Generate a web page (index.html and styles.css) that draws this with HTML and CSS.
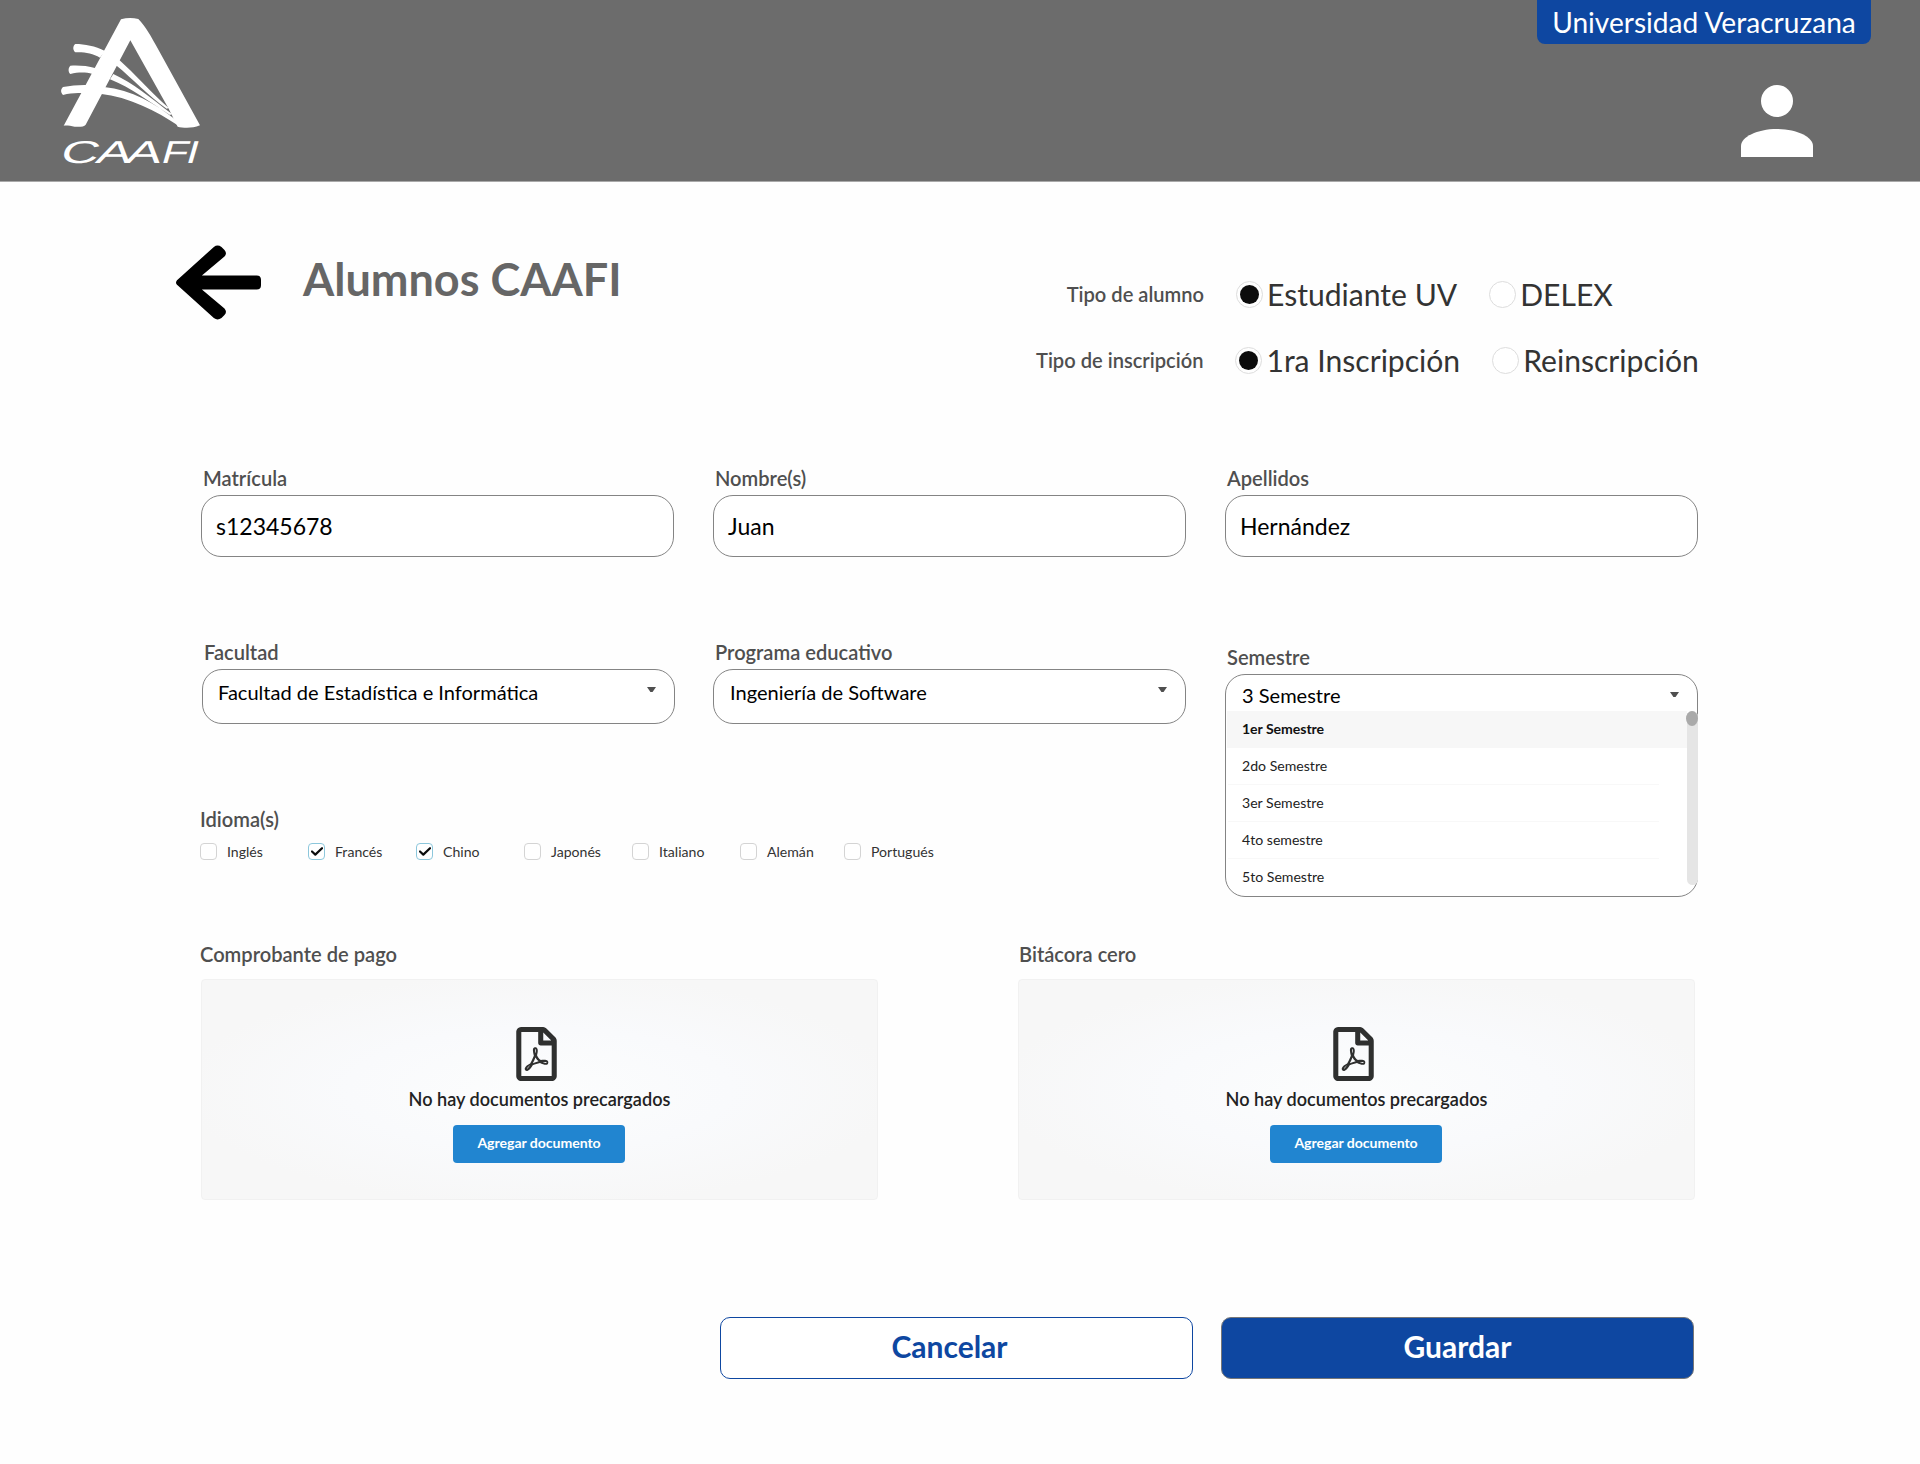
FILE: index.html
```html
<!DOCTYPE html>
<html lang="es">
<head>
<meta charset="utf-8">
<title>Alumnos CAAFI</title>
<link rel="stylesheet" href="styles.css">
</head>
<body>
<header class="topbar">
  <svg class="logo" viewBox="0 0 600 540" role="img" aria-label="CAAFI">
    <path fill="#fff" fill-rule="evenodd" d="M243 58Q268 51 295 57C320 84 332 108 347 134L480 376C455 386 430 384 413 380L386 326L271 121L137 374C132 381 118 381 104 380C92 378 82 376 71 377Z"/>
    <path fill="#fff" d="M106 132C135 132 165 138 195 153L180 173C158 160 135 156 106 157C98 150 98 138 106 132ZM91 197C118 196 140 197 168 205L158 222C135 216 115 217 91 222C84 215 84 204 91 197ZM69 261C95 257 115 254 145 255L130 280C110 278 90 280 69 285C62 278 61 268 69 261Z"/>
    <path fill="#fff" d="M238 180C285 222 330 275 386 324L380 326C325 288 280 238 228 196ZM220 222C280 250 330 292 396 342L390 345C325 304 275 264 210 238ZM192 261C275 270 345 310 408 360L420 380C345 330 270 292 180 281Z"/>
    <g class="logo-text">
      <text transform="translate(56 488) skewX(-16) scale(1.66 1)" x="0 65 119">CAA</text>
      <text transform="translate(359 488) skewX(-16) scale(1.36 1)" x="0 54">FI</text>
    </g>
  </svg>
  <div class="topbar-side">
    <div class="org">Universidad Veracruzana</div>
    <svg class="avatar" viewBox="0 0 72 72"><circle cx="36" cy="16" r="16"/><path d="M0 72V61C0 52 16 44 36 44S72 52 72 61V72Z"/></svg>
  </div>
</header>
<main class="page">
  <section class="heading">
    <svg class="back" viewBox="47 74 256 224"><path d="M50 179L161 79Q172 70 184 79L193 88Q202 98 193 108L125 165H290Q303 165 303 178V194Q303 207 290 207H125L193 264Q202 274 193 284L184 293Q172 302 161 293L50 193Q44 186 50 179Z"/></svg>
    <h1 class="title">Alumnos CAAFI</h1>
    <div class="types">
      <div class="type-row">
        <span class="label type-label">Tipo de alumno</span>
        <span class="radio on"></span><span class="radio-text">Estudiante UV</span>
        <span class="radio second"></span><span class="radio-text">DELEX</span>
      </div>
      <div class="type-row">
        <span class="label type-label">Tipo de inscripción</span>
        <span class="radio on"></span><span class="radio-text">1ra Inscripción</span>
        <span class="radio second"></span><span class="radio-text">Reinscripción</span>
      </div>
    </div>
  </section>

  <section class="fields">
    <div class="field"><span class="label">Matrícula</span><div class="input"><span>s12345678</span></div></div>
    <div class="field"><span class="label">Nombre(s)</span><div class="input"><span>Juan</span></div></div>
    <div class="field"><span class="label">Apellidos</span><div class="input"><span>Hernández</span></div></div>
  </section>

  <section class="details">
    <div class="field faculty"><span class="label">Facultad</span><div class="select"><div class="value"><span>Facultad de Estadística e Informática</span><i class="caret"></i></div></div></div>
    <div class="field"><span class="label">Programa educativo</span><div class="select"><div class="value"><span>Ingeniería de Software</span><i class="caret"></i></div></div></div>
    <div class="field semester"><span class="label">Semestre</span>
      <div class="select open">
        <div class="value"><span>3 Semestre</span><i class="caret"></i></div>
        <div class="menu">
          <ul class="options">
            <li class="active"><span>1er Semestre</span></li>
            <li><span>2do Semestre</span></li>
            <li><span>3er Semestre</span></li>
            <li><span>4to semestre</span></li>
            <li><span>5to Semestre</span></li>
          </ul>
          <div class="track"><div class="thumb"></div></div>
        </div>
      </div>
    </div>
    <div class="languages">
      <span class="label">Idioma(s)</span>
      <div class="checks">
        <div class="check"><i class="box"></i><span>Inglés</span></div>
        <div class="check"><i class="box on"><svg viewBox="0 0 12 9"><path d="M1 4.500L4.300 7.600L11 1.200"/></svg></i><span>Francés</span></div>
        <div class="check"><i class="box on"><svg viewBox="0 0 12 9"><path d="M1 4.500L4.300 7.600L11 1.200"/></svg></i><span>Chino</span></div>
        <div class="check"><i class="box"></i><span>Japonés</span></div>
        <div class="check"><i class="box"></i><span>Italiano</span></div>
        <div class="check"><i class="box"></i><span>Alemán</span></div>
        <div class="check"><i class="box"></i><span>Portugués</span></div>
      </div>
    </div>
  </section>

  <svg width="0" height="0" class="defs"><defs><symbol id="pdf" viewBox="0 0 384 512"><path d="M369.900 97.900L286 14C277 5 264.800-.1 252.100-.1H48C21.500 0 0 21.500 0 48v416c0 26.500 21.500 48 48 48h288c26.500 0 48-21.500 48-48V131.900c0-12.700-5.100-25-14.100-34zM332.100 128H256V51.900l76.100 76.100zM48 464V48h160v104c0 13.300 10.700 24 24 24h104v288H48zm250.200-143.700c-12.200-12-47-8.700-64.400-6.500-17.200-10.500-28.700-25-36.800-46.300 3.900-16.100 10.100-40.600 5.400-56-4.200-26.200-37.800-23.600-42.600-5.900-4.400 16.100-.4 38.500 7 67.100-10 23.900-24.900 56-35.400 74.400-20 10.300-47 26.200-51 46.200-3.300 15.800 26 55.200 76.100-31.200 22.400-7.400 46.800-16.500 68.400-20.100 18.900 10.200 41 17 55.800 17 25.500 0 28-28.200 17.500-38.700zm-198.100 77.800c5.100-13.700 24.500-29.500 30.400-35-19 30.300-30.400 35.700-30.400 35zm81.600-190.600c7.400 0 6.700 32.100 1.800 40.800-4.400-13.900-4.300-40.800-1.800-40.800zm-24.400 136.600c9.700-16.900 18-37 24.700-54.700 8.300 15.100 18.900 27.200 30.100 35.500-20.800 4.300-38.900 13.100-54.800 19.200zm131.600-5s-5 6-37.300-7.800c35.100-2.600 40.900 5.400 37.300 7.800z"/></symbol></defs></svg>
  <section class="uploads">
    <div class="upload"><span class="label">Comprobante de pago</span>
      <div class="drop"><svg class="pdf"><use href="#pdf"/></svg><span class="empty">No hay documentos precargados</span><button class="add">Agregar documento</button></div>
    </div>
    <div class="upload"><span class="label">Bitácora cero</span>
      <div class="drop"><svg class="pdf"><use href="#pdf"/></svg><span class="empty">No hay documentos precargados</span><button class="add">Agregar documento</button></div>
    </div>
  </section>

  <section class="actions">
    <button class="btn cancel">Cancelar</button>
    <button class="btn primary">Guardar</button>
  </section>
</main>
</body>
</html>
```
FILE: styles.css
```css
* { box-sizing: border-box; }
body { margin: 0; min-height: 1464px; background: #fefefe; font-family: Lato, sans-serif; color: #000; }
.topbar { display: flex; justify-content: space-between; height: 182px; padding: 0 49px 0 40px; background: #6c6c6c; border-bottom: 1px solid #a9a9a9; }
.logo { width: 200px; height: 180px; }
.logo-text { font-family: "Liberation Sans", sans-serif; font-size: 95px; fill: #fff; }
.topbar-side { display: flex; flex-direction: column; align-items: flex-end; }
.org { width: 334px; height: 44px; line-height: 45px; text-align: center; color: #fff; background: #0e47a1; border-radius: 0 0 8px 8px; font-size: 28.1px; }
.avatar { width: 72px; height: 72px; margin: 41px 58px 0 0; fill: #fff; }

.page { padding: 63px 222px 0 201px; }
.heading { display: flex; align-items: flex-start; height: 221px; }
.back { width: 85px; height: 75px; margin-left: -25px; }
.title { margin: 6px 0 0 42px; font-size: 45px; line-height: 56px; font-weight: 700; color: #666; }
.types { width: 662px; margin: 31px 0 0 auto; display: flex; flex-direction: column; gap: 30px; }
.type-row { display: flex; align-items: center; height: 36px; white-space: nowrap; }
.label { display: block; font-size: 20.1px; line-height: 24px; font-weight: 600; color: #4f4f4f; }
.type-label { width: 168px; margin-right: 32px; text-align: right; }
.radio { width: 27px; height: 27px; flex: none; margin-right: 4px; border: 1px solid #ddd; border-radius: 50%; background: #fff; }
.radio.on { padding: 3px; background: #0c0c0c content-box; }
.radio.second { margin-left: 32px; }
.radio-text { font-size: 30.1px; line-height: 36px; color: #333; }

.fields, .details { display: grid; grid-template-columns: repeat(3, 473px); column-gap: 39px; }
.field .label { margin: 0 0 5px 2px; }
.input { display: flex; align-items: center; height: 62px; padding: 0 14px; border: 1px solid #848484; border-radius: 20px; background: #fff; font-size: 23px; }
.details { margin-top: 83px; grid-template-rows: 167px auto; }
.faculty { padding-left: 1px; margin-right: -1px; }
.select { height: 55px; border: 1px solid #848484; border-radius: 20px; background: #fff; font-size: 20.05px; }
.value { display: flex; justify-content: space-between; padding: 10px 18px 0 16px; line-height: 24px; }
.faculty .value { padding-left: 15px; }
.caret { margin-top: 7px; width: 9px; height: 5px; background: #4f4f4f; clip-path: polygon(0 0, 100% 0, 62% 100%, 38% 100%); }
.semester { grid-row: span 2; padding-top: 5px; }
.open { height: 223px; }
.open .value { height: 36px; padding-top: 8px; }
.open .caret { margin-top: 9px; }
.menu { position: relative; }
.options { list-style: none; margin: 0; padding: 0; font-size: 14.1px; color: #222; }
.options li { height: 37px; padding-left: 16px; line-height: 36px; background: linear-gradient(#f8f8f8, #f8f8f8) 2px 100% / 431px 1px no-repeat; }
.options li.active { margin: 0 10px 0 1px; padding-left: 15px; background: #f7f7f7; color: #111; font-weight: 700; letter-spacing: -0.05px; }
.options li:last-child { background: none; }
.track { position: absolute; top: 0; right: -1px; width: 11px; height: 174px; border-radius: 6px; background: #e5e5e5; }
.thumb { width: 12px; height: 15px; margin-left: -1px; border-radius: 50%; background: #aaa; }

.languages { grid-column: span 2; margin-left: -1px; }
.checks { display: flex; margin-top: 12px; font-size: 14.1px; color: #333; }
.check { display: flex; align-items: center; gap: 10px; width: 108px; height: 17px; }
.check:nth-child(6) { width: 104px; }
.box { display: flex; align-items: center; justify-content: center; width: 17px; height: 17px; border: 1px solid #d4d4d4; border-radius: 4px; background: #fff; }
.box.on { border-color: #8cc7dc; }
.box svg { width: 12px; height: 9px; fill: none; stroke: #0c0c0c; stroke-width: 2.2; stroke-linecap: round; stroke-linejoin: round; }

.defs { display: block; }
.uploads { display: flex; gap: 140px; margin-top: 45px; }
.upload { width: 677px; }
.upload .label { margin-left: -1px; }
.upload + .upload .label { margin-left: 1px; }
.upload + .upload { width: 676px; }
.drop { display: flex; flex-direction: column; align-items: center; width: 677px; height: 221px; margin-top: 13px; padding: 47px 1px 0 0; border: 1px solid #f1f1f1; border-radius: 4px; background: radial-gradient(#fcfdfd 0%, #f9fafc 40%, #f7f7f7 75%); }
.pdf { width: 41px; height: 54px; margin-right: 5px; fill: #2f302f; }
.empty { margin-top: 6px; margin-left: 1px; font-size: 18.1px; line-height: 24px; font-weight: 600; color: #222; }
.add { width: 172px; height: 38px; margin-top: 14px; padding: 0 0 3px; border: 0; border-radius: 4px; background: #2185d0; color: #fff; font: 700 14.1px Lato, sans-serif; letter-spacing: -0.05px; }

.actions { display: flex; justify-content: flex-end; gap: 28px; margin: 117px 4px 0 0; }
.btn { width: 473px; height: 62px; padding: 0 0 4px; border: 1px solid #0e47a1; border-radius: 10px; background: #fff; color: #0e47a1; font: 700 30px Lato, sans-serif; }
.btn.cancel { padding-right: 14px; }
.btn.primary { border-color: #777; background: #0e47a1; color: #fff; }
```
